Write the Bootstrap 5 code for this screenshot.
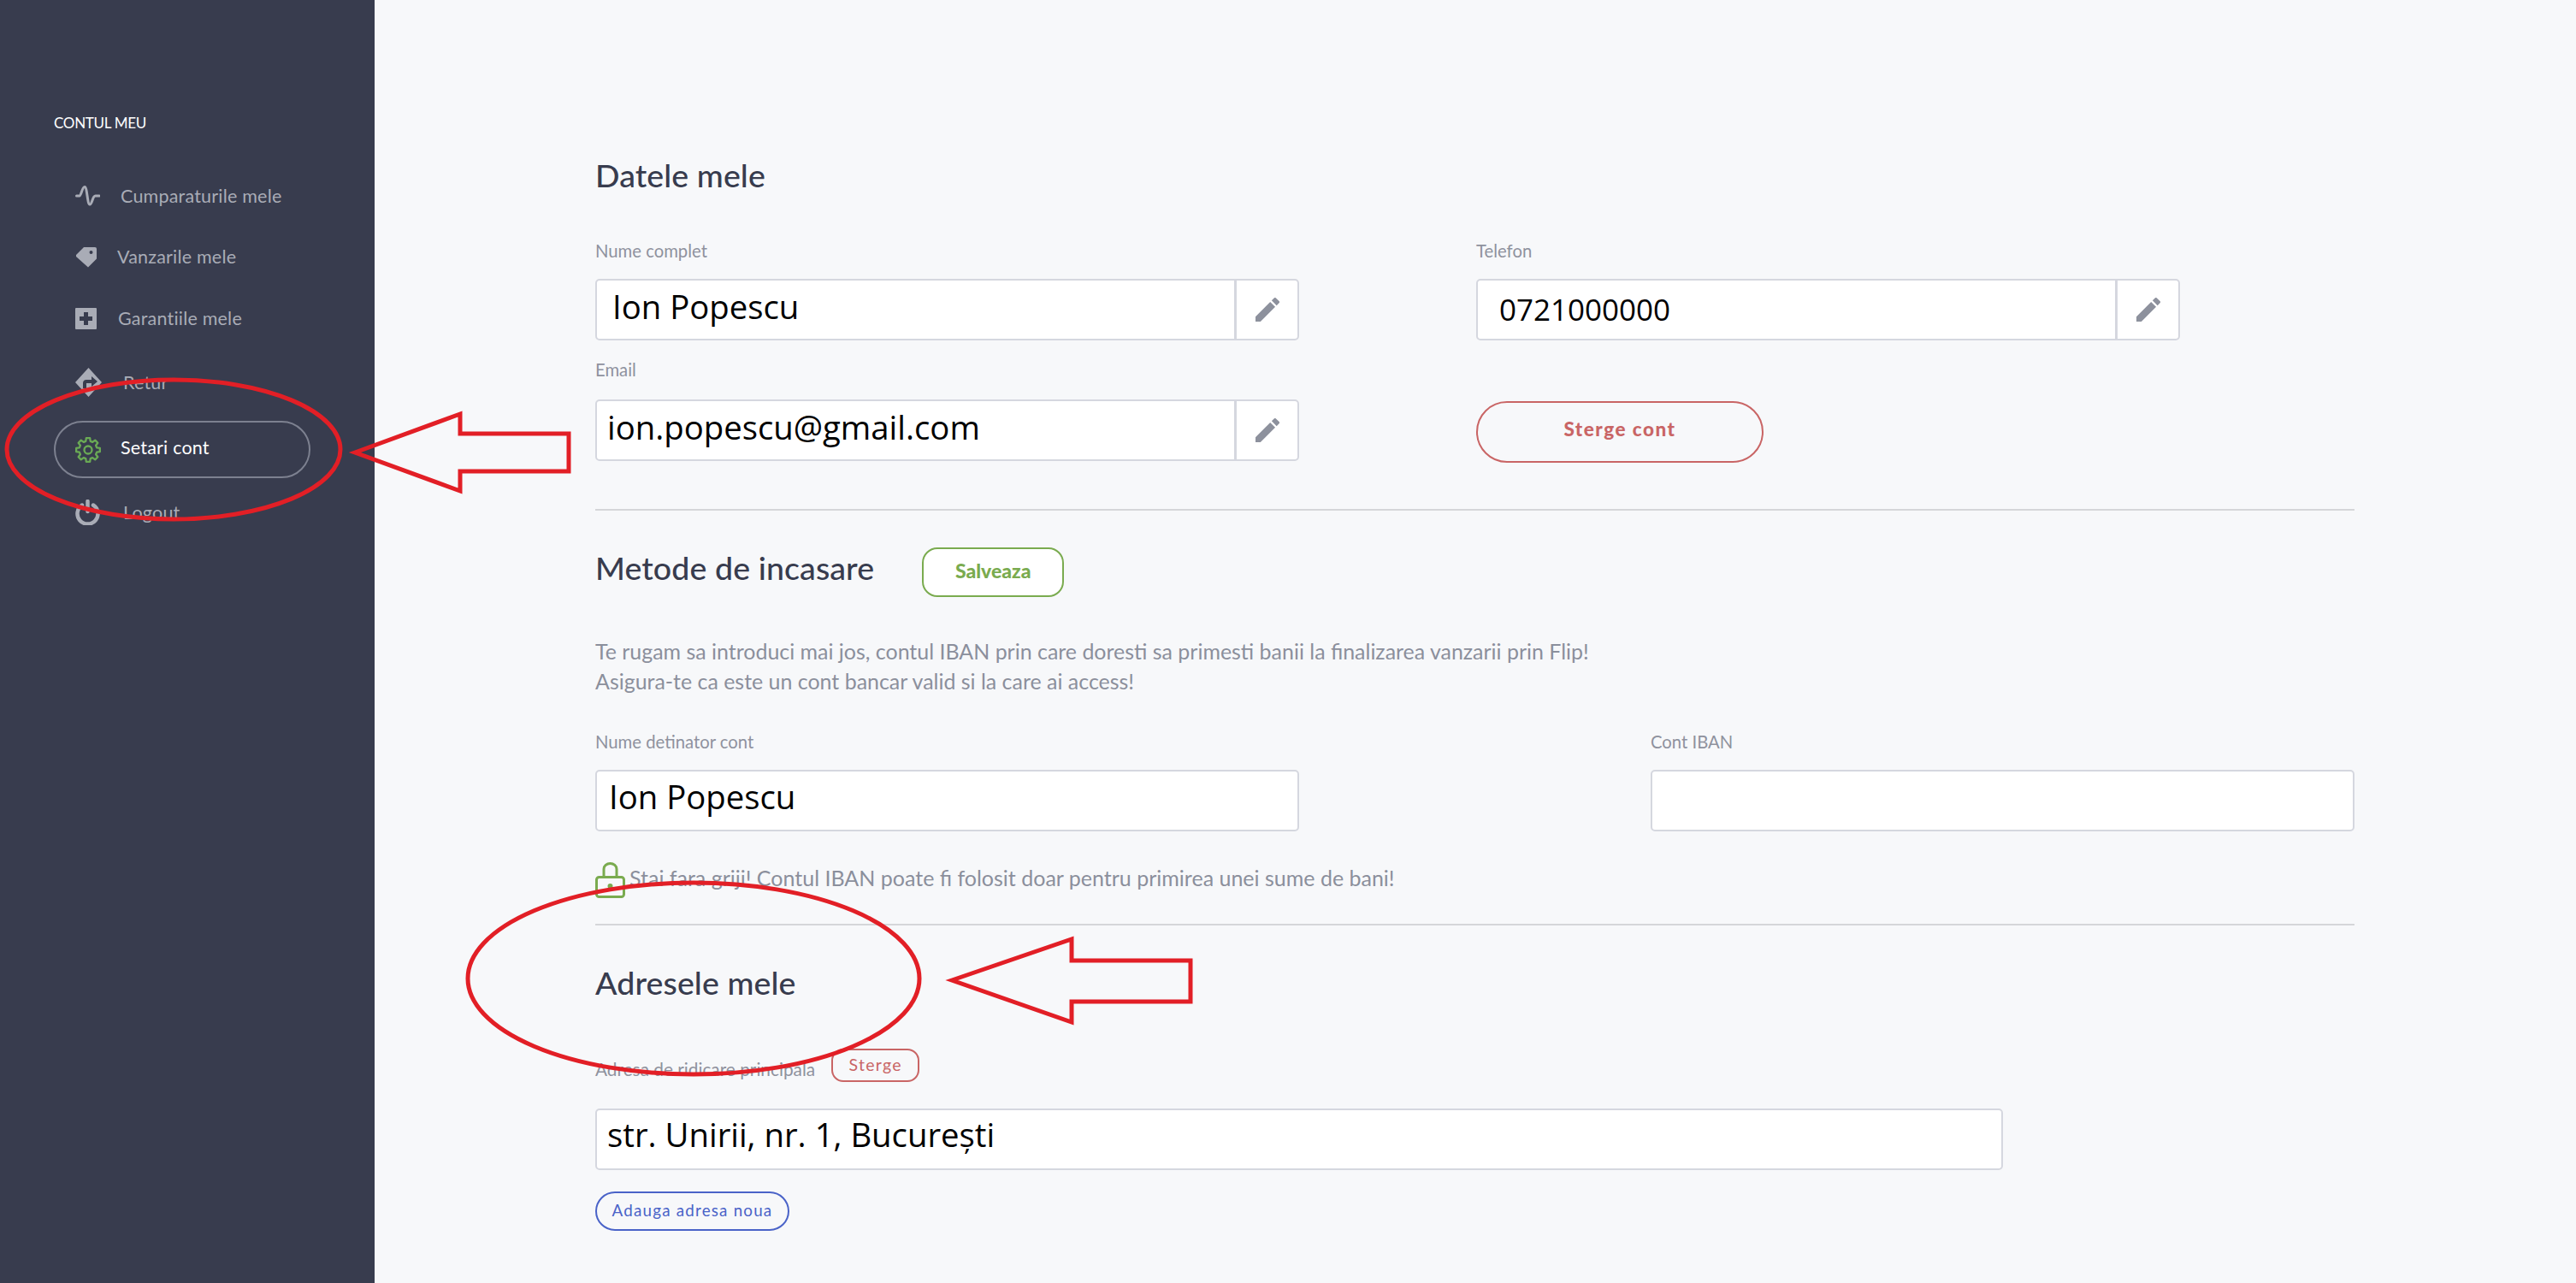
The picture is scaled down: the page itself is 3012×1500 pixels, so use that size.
<!doctype html>
<html lang="ro">
<head>
<meta charset="utf-8">
<title>Setari cont</title>
<link href="https://cdn.jsdelivr.net/npm/bootstrap@5.3.0/dist/css/bootstrap.min.css" rel="stylesheet">
<style>
html,body{margin:0;background:#f7f8fa}
body{font-family:Lato,"Liberation Sans",sans-serif}
.pg{width:3012px;height:1500px;overflow:hidden}
.sb{width:438px;flex:none;background:#383c4e;padding-top:132px}
.sb-title{margin-left:63px;font-size:17px;line-height:24px;color:#fff;letter-spacing:-.3px}
.sb-nav{margin:39.5px 0 0 63px;width:300px}
.sb-link{height:67px;padding-left:23px;border:2px solid transparent;color:#a9acb6;font-size:21.5px;letter-spacing:.2px}
.sb-link:hover{color:#a9acb6}
.sb-link.on{border-color:#7d8190;color:#fff}
.sb-link.on span{position:relative;top:-2px}
.i2{margin-top:4px;gap:24px}.i1{gap:24px}.i3{margin-top:5px;gap:25px}.i4{margin-top:8px;gap:25px}.i5{margin-top:11.5px;gap:23px}.i6{margin-top:6.5px;gap:27px}
.mn{padding:180px 259px 0 258px}
.ttl{font-size:37.5px;line-height:50px;font-weight:500;color:#383c4e;margin:0;letter-spacing:.1px}
.lbl{font-size:20.3px;line-height:24px;color:#8f929e;margin:0 0 21px;display:block}
.two{display:flex;justify-content:space-between}
.two-a{display:grid;grid-template-columns:823px 821px;column-gap:207px;margin-top:51px}
.fld{height:72px;border:2px solid #d5d7df;border-radius:5px;background:#fff;font-family:"Open Sans",sans-serif;font-size:38.3px;color:#000;box-shadow:none;padding:0 18px 8px}
.fld:focus{border-color:#d5d7df;box-shadow:none}
.fld-w{width:823px}
.ed{width:75px;height:72px;background:#fff;border:2px solid #d5d7df;border-radius:0 5px 5px 0;padding:0}
.ed:hover{background:#fff;border-color:#d5d7df}
.gp{width:823px;flex-wrap:nowrap}
.gp .fld{border-radius:5px 0 0 5px}
.t-lbl{margin-top:22px;margin-bottom:23px}
.spc{height:71px}
.b-del{width:336px;height:72px;background:transparent;border:2px solid #c96565;color:#c96565;font-size:22.500px;font-weight:900;letter-spacing:1.5px;padding:0 0 6px}
.sep{height:2px;background:#d5d6d9;margin:0;opacity:1;border:0}
.s1{margin-top:54px}
.h-row{margin-top:43px;height:58px}
.b-save{width:166px;height:58px;margin-left:56px;background:#fff;border:2px solid #7aab4f;border-radius:18px;color:#7aab4f;font-size:23px;font-weight:900;padding:0 0 4px}
.h-row .ttl{position:relative;top:-5px}
.txt{font-size:24.95px;line-height:35px;color:#8b8f9c;margin:46px 0 41px}
.lock-row{margin-top:36px;height:42px;gap:5px;font-size:25px;color:#8b8f9c}
.lock-row span{position:relative;top:-2px}
.s2{margin-top:30px}
.t3{margin-top:42px}
.a-row{margin-top:52px;height:39px;gap:19px}
.a-row .lbl{margin:0;position:relative;top:4px;font-size:20.8px}
.b-x{width:103px;height:39px;background:transparent;border:2px solid #c96565;border-radius:14px;color:#c96565;font-size:19.500px;letter-spacing:1.3px;padding:0 0 2px}
.fld-l{width:1646px;margin-top:31px;padding:0 18px 12px 12px}
.b-add{display:block;width:227px;height:46px;margin-top:25px;background:transparent;border:2px solid #4a63c8;color:#4a63c8;font-size:18.800px;letter-spacing:1.2px;padding:0 0 1px}
.iban-f{padding:0 18px 10px 14px}.mail-f{padding-left:12px}
.tel-f{padding:0 18px 2px 25px;font-size:35px}
.ov{position:absolute;left:0;top:0;pointer-events:none}
</style>
</head>
<body>
<div class="pg position-relative d-flex">
  <aside class="sb">
    <div class="sb-title">CONTUL MEU</div>
    <nav class="nav flex-column sb-nav">
      <a class="nav-link d-flex align-items-center sb-link i1" href="#">
        <svg width="29" height="24" viewBox="0 0 29 24" fill="none" stroke="#a9acb6" stroke-width="3" stroke-linecap="round" stroke-linejoin="round"><path d="M1.500 12H5C7 12 8 1.500 11 1.500S14 22 17 22 20 12 23.500 12H28"/></svg>
        <span>Cumparaturile mele</span></a>
      <a class="nav-link d-flex align-items-center sb-link i2" href="#">
        <svg width="25" height="25" viewBox="0 0 25 25"><path fill="#a9acb6" fill-rule="evenodd" d="M10 1h13a2 2 0 0 1 2 2v11.500L15 24.500 1 12v-2zM18.500 5a2 2 0 1 0 0 4 2 2 0 0 0 0-4z"/></svg>
        <span>Vanzarile mele</span></a>
      <a class="nav-link d-flex align-items-center sb-link i3" href="#">
        <svg width="25" height="25" viewBox="0 0 25 25"><path fill="#a9acb6" fill-rule="evenodd" d="M1 0h23a1 1 0 0 1 1 1v23a1 1 0 0 1-1 1H1a1 1 0 0 1-1-1V1a1 1 0 0 1 1-1zm9 5v5H5v5h5v5h5v-5h5v-5h-5V5z"/></svg>
        <span>Garantiile mele</span></a>
      <a class="nav-link d-flex align-items-center sb-link i4" href="#">
        <svg width="31" height="34" viewBox="0 0 31 34"><path fill="#a9acb6" fill-rule="evenodd" d="M15.500 0l15.500 17-15.500 17L0 17zM9 24h4v-6h6v4l7-6-7-6v4h-6c-2.500 0-4 1.500-4 4z"/></svg>
        <span>Retur</span></a>
      <a class="nav-link d-flex align-items-center sb-link rounded-pill on i5" href="#">
        <svg width="30" height="30" viewBox="0 0 30 30" fill="none" stroke="#6aaa55" stroke-width="2.300" stroke-linejoin="round"><path d="M12.810 1.170H17.190L17.720 4.860 20.250 5.910 23.230 3.670 26.330 6.770 24.090 9.750 25.140 12.280 28.830 12.810V17.190L25.140 17.720 24.090 20.250 26.330 23.230 23.230 26.330 20.250 24.090 17.720 25.140 17.190 28.830H12.810L12.280 25.140 9.750 24.090 6.770 26.330 3.670 23.230 5.910 20.250 4.860 17.720 1.170 17.190V12.810L4.860 12.280 5.910 9.750 3.670 6.770 6.770 3.670 9.750 5.910 12.280 4.860Z"/><circle cx="15" cy="15" r="4.500"/></svg>
        <span>Setari cont</span></a>
      <a class="nav-link d-flex align-items-center sb-link i6" href="#">
        <svg width="29" height="30" viewBox="0 0 29 30" fill="none" stroke="#a9acb6" stroke-width="4.500" stroke-linecap="round"><path d="M8 6.500a12 12 0 1 0 13 0"/><path d="M14.500 2v12"/></svg>
        <span>Logout</span></a>
    </nav>
  </aside>
  <main class="mn flex-grow-1">
    <h2 class="ttl">Datele mele</h2>
    <div class="two-a">
      <div>
        <label class="lbl">Nume complet</label>
        <div class="input-group gp">
          <input class="form-control fld" value="Ion Popescu">
          <button class="btn ed" type="button" aria-label="Editeaza"><svg width="28" height="28" viewBox="3 3 18 18" fill="#8d919d"><path d="M3 17.250V21h3.750L17.810 9.940l-3.750-3.750zM20.710 7.040a1 1 0 0 0 0-1.410l-2.340-2.340a1 1 0 0 0-1.410 0l-1.830 1.830 3.750 3.750z"/></svg></button>
        </div>
        <label class="lbl t-lbl">Email</label>
        <div class="input-group gp">
          <input class="form-control fld mail-f" value="ion.popescu@gmail.com">
          <button class="btn ed" type="button" aria-label="Editeaza"><svg width="28" height="28" viewBox="3 3 18 18" fill="#8d919d"><path d="M3 17.250V21h3.750L17.810 9.940l-3.750-3.750zM20.710 7.040a1 1 0 0 0 0-1.410l-2.340-2.340a1 1 0 0 0-1.410 0l-1.830 1.830 3.750 3.750z"/></svg></button>
        </div>
      </div>
      <div>
        <label class="lbl">Telefon</label>
        <div class="input-group gp">
          <input class="form-control fld tel-f" value="0721000000">
          <button class="btn ed" type="button" aria-label="Editeaza"><svg width="28" height="28" viewBox="3 3 18 18" fill="#8d919d"><path d="M3 17.250V21h3.750L17.810 9.940l-3.750-3.750zM20.710 7.040a1 1 0 0 0 0-1.410l-2.340-2.340a1 1 0 0 0-1.410 0l-1.830 1.830 3.750 3.750z"/></svg></button>
        </div>
        <div class="spc"></div>
        <button class="btn rounded-pill b-del" type="button">Sterge cont</button>
      </div>
    </div>
    <hr class="sep s1">
    <div class="d-flex align-items-center h-row">
      <h2 class="ttl">Metode de incasare</h2>
      <button class="btn b-save" type="button">Salveaza</button>
    </div>
    <p class="txt">Te rugam sa introduci mai jos, contul IBAN prin care doresti sa primesti banii la finalizarea vanzarii prin Flip!<br>Asigura-te ca este un cont bancar valid si la care ai access!</p>
    <div class="two">
      <div>
        <label class="lbl">Nume detinator cont</label>
        <input class="form-control fld fld-w iban-f" value="Ion Popescu">
      </div>
      <div>
        <label class="lbl">Cont IBAN</label>
        <input class="form-control fld fld-w" value="">
      </div>
    </div>
    <div class="d-flex align-items-center lock-row">
      <svg width="35" height="42" viewBox="0 0 35 42" fill="none" stroke="#7aab4f" stroke-width="3"><rect x="1.500" y="17.500" width="32" height="23" rx="3"/><path d="M10 17V8a7.500 6.500 0 0 1 15 0v9"/><circle cx="17.500" cy="28" r="3" fill="#7aab4f" stroke="none"/><path d="M17.500 29v5"/></svg>
      <span>Stai fara griji! Contul IBAN poate fi folosit doar pentru primirea unei sume de bani!</span>
    </div>
    <hr class="sep s2">
    <h2 class="ttl t3">Adresele mele</h2>
    <div class="d-flex align-items-center a-row">
      <label class="lbl">Adresa de ridicare principala</label>
      <button class="btn b-x" type="button">Sterge</button>
    </div>
    <input class="form-control fld fld-l" value="str. Unirii, nr. 1, București">
    <button class="btn rounded-pill b-add" type="button">Adauga adresa noua</button>
  </main>
  <svg class="ov" width="3012" height="1500" viewBox="0 0 3012 1500" fill="none" stroke="#e21f26" stroke-width="5">
    <ellipse cx="203" cy="525.500" rx="195" ry="81.500"/>
    <ellipse cx="811" cy="1144" rx="264" ry="112"/>
    <path d="M415 529 538 484V507H665V551H538V574Z"/>
    <path d="M1113 1146 1253 1098V1123H1392V1171H1253V1195Z"/>
  </svg>
</div>
<script src="https://cdn.jsdelivr.net/npm/bootstrap@5.3.0/dist/js/bootstrap.bundle.min.js"></script>
</body>
</html>
